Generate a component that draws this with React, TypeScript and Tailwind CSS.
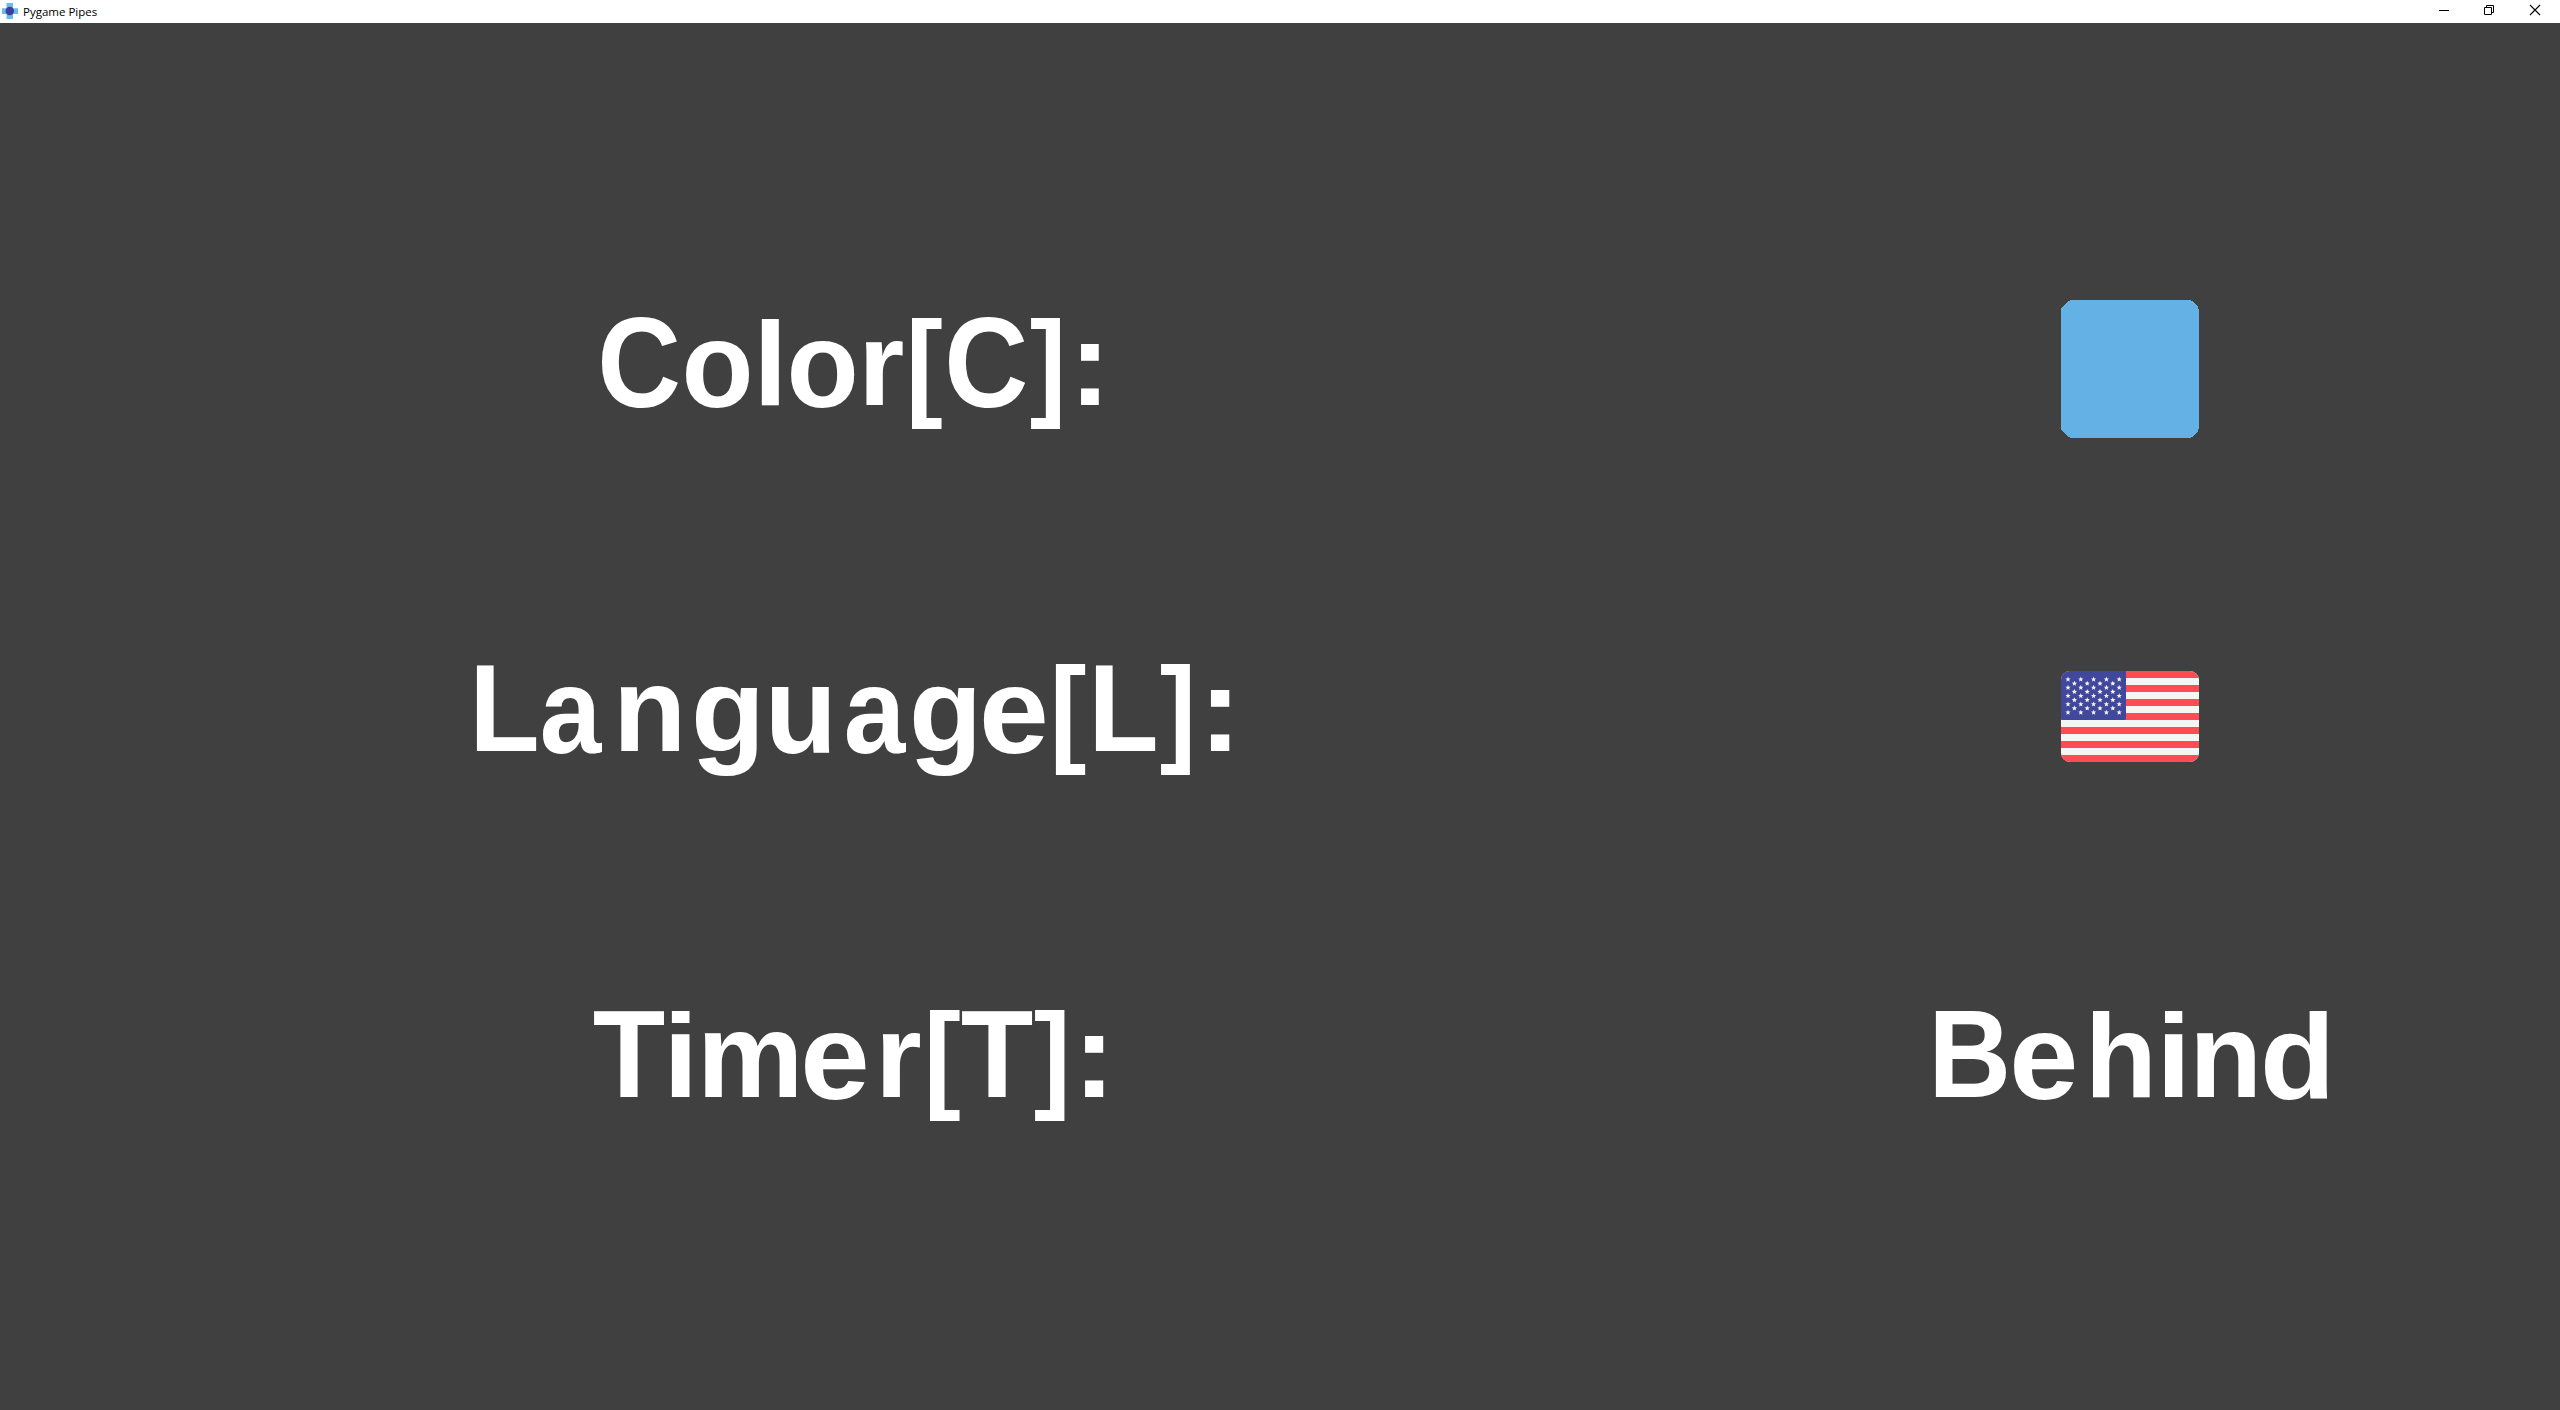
import type { CSSProperties } from "react";

/** Ink box of each glyph in thousandths of an em: left, right, up, down. */
const INK: Record<string, [number, number, number, number]> = {
  C: [41, 695, 698, 10],
  o: [39, 572, 538, 10],
  l: [70, 207, 725, 0],
  r: [66, 374, 538, 0],
  "[": [56, 321, 725, 208],
  "]": [12, 277, 725, 208],
  ":": [96, 237, 505, 0],
  L: [67, 580, 688, 0],
  a: [29, 563, 538, 10],
  n: [66, 549, 538, 0],
  u: [62, 545, 528, 10],
  e: [39, 522, 538, 10],
  g: [41, 544, 538, 212],
  T: [11, 600, 688, 0],
  i: [70, 207, 725, 0],
  m: [66, 827, 538, 0],
  B: [67, 677, 688, 0],
  h: [70, 549, 725, 0],
  d: [41, 545, 725, 10],
};

/** Height above and depth below the baseline, in pixels. */
const HEIGHTS: Record<string, [number, number]> = {
  C: [87, 3],
  o: [64.3, 3],
  l: [86, 0],
  r: [64.3, 0],
  "[": [86, 24],
  "]": [86, 24],
  ":": [61, 0],
  L: [86, 0],
  a: [64.6, 3],
  n: [64.4, 0],
  u: [64, 3],
  e: [64.3, 2.9],
  g: [64.3, 25],
  T: [86, 0],
  i: [86, 0],
  m: [64.6, 0],
  B: [86, 0],
  h: [86, 0],
  d: [86, 2.8],
};

type Glyph = [char: string, left: number, right: number];

const COLOR: Glyph[] = [
  ["C", 602.1, 677.9], ["o", 686.1, 749], ["l", 762.1, 779], ["o", 791.1, 854.2], ["r", 866.4, 902.9],
  ["[", 912.5, 942], ["C", 948.9, 1025], ["]", 1031.1, 1060], [":", 1081.3, 1099],
];
const LANGUAGE: Glyph[] = [
  ["L", 477.2, 536.3], ["a", 543.1, 602.2], ["n", 621, 679], ["g", 696.4, 757.4], ["u", 772.1, 829.2],
  ["a", 847, 906.1], ["g", 913.8, 974], ["e", 984, 1044.6], ["[", 1055.6, 1084.8], ["L", 1096.4, 1155.5],
  ["]", 1161.2, 1190], [":", 1211, 1229.3],
];
const TIMER: Glyph[] = [
  ["T", 594.1, 664], ["i", 672.4, 689.9], ["m", 705, 796], ["e", 804.9, 865.2], ["r", 883, 920],
  ["[", 929.6, 959.1], ["T", 962.1, 1032.1], ["]", 1035, 1064.3], [":", 1085, 1103.1],
];
const BEHIND: Glyph[] = [
  ["B", 1936.2, 2006.2], ["e", 2014.2, 2074.2], ["h", 2092.6, 2149.2], ["i", 2164.8, 2182], ["n", 2197.2, 2254.8],
  ["d", 2265, 2327],
];

const EM = 0.118;

function fit([char, left, right]: Glyph, next?: Glyph): CSSProperties {
  const [l, r, up, down] = INK[char];
  const [above, below] = HEIGHTS[char];
  const sx = (right - left) / ((r - l) * EM);
  const sy = (above + below) / ((up + down) * EM);
  const dx = -l * EM * sx;
  const dy = below - down * EM * sy;
  return {
    width: (next ? next[1] : right) - left,
    transform: `translate(${dx}px, ${dy}px) scale(${sx}, ${sy})`,
  };
}

function Word({ glyphs }: { glyphs: Glyph[] }) {
  return (
    <div className="flex h-[118px] whitespace-nowrap text-[118px] leading-[118px] font-bold text-white">
      {glyphs.map((g, i) => (
        <span key={i} className="block shrink-0 origin-[0_100px]" style={fit(g, glyphs[i + 1])}>
          {g[0]}
        </span>
      ))}
    </div>
  );
}

function star(cx: number, cy: number) {
  return Array.from({ length: 10 }, (_, k) => {
    const a = (Math.PI * k) / 5 - Math.PI / 2;
    const r = k % 2 ? 1.2 : 2.8;
    return `${(cx + r * Math.cos(a)).toFixed(2)},${(cy + r * Math.sin(a)).toFixed(2)}`;
  }).join(" ");
}

function Flag() {
  const stars: string[] = [];
  for (let row = 0; row < 9; row++) {
    const odd = row % 2;
    for (let col = 0; col < (odd ? 4 : 5); col++) {
      stars.push(star(7 + col * 12.8 + (odd ? 6.4 : 0), 8.4 + row * 4.13));
    }
  }
  return (
    <svg width="138" height="91" viewBox="0 0 138 91" className="block">
      <clipPath id="flag">
        <rect width="138" height="91" rx="9" />
      </clipPath>
      <g clipPath="url(#flag)">
        <rect width="138" height="91" fill="#f5f5f5" />
        {[0, 1, 2, 3, 4, 5, 6].map((i) => (
          <rect key={i} y={i * 14} width="138" height="7" fill="#ff4b55" />
        ))}
        <path d="M0 0H65V48L64 49H1L0 48Z" fill="#41479b" />
        {stars.map((p) => (
          <polygon key={p} points={p} fill="#f5f5f5" />
        ))}
      </g>
    </svg>
  );
}

function TitleBar() {
  return (
    <header className="flex h-[23px] items-start bg-white text-black">
      <svg width="20" height="23" viewBox="0 0 20 23" className="block shrink-0">
        <path d="M6.5 3H13V8.3H18V14H13V19H6.5V14H2V8.3H6.5Z" fill="#6bbbea" />
        <circle cx="9.8" cy="11" r="4.3" fill="#3f3f9b" />
      </svg>
      <span className="ml-[3px] mt-[3px] font-['Open_Sans'] text-[11.5px] leading-[17px]">Pygame Pipes</span>
      <svg width="121" height="23" viewBox="0 0 121 23" fill="none" stroke="#000" className="ml-auto block">
        <path d="M0 10.5H10" />
        <path d="M45.5 7.5H52.5V14.5H45.5ZM47.5 7.5V5.5H54.5V12.5H52.5" />
        <path d="M91 5L101 15M101 5L91 15" strokeWidth="1.1" />
      </svg>
    </header>
  );
}

export default function App() {
  return (
    <div className="h-[1410px] w-[2560px] overflow-hidden bg-[#404040] font-['Liberation_Sans',sans-serif]">
      <TitleBar />
      <main className="grid grid-cols-[1706px_854px] grid-rows-[346px_346px_346px] pt-[168px]">
        <div className="pt-[114px] pl-[602.1px]">
          <Word glyphs={COLOR} />
        </div>
        <div className="pt-[109px] pl-[355px]">
          <svg width="138" height="138" viewBox="0 0 138 138" shapeRendering="crispEdges" className="block">
            <path
              d="M10 0H128L131 1L137 7L138 10V128L137 131L131 137L128 138H10L7 137L1 131L0 128V10L1 7L7 1Z"
              fill="#64b2e5"
            />
          </svg>
        </div>
        <div className="pt-[114px] pl-[477.2px]">
          <Word glyphs={LANGUAGE} />
        </div>
        <div className="pt-[134px] pl-[355px]">
          <Flag />
        </div>
        <div className="pt-[114px] pl-[594.1px]">
          <Word glyphs={TIMER} />
        </div>
        <div className="pt-[114px] pl-[230.2px]">
          <Word glyphs={BEHIND} />
        </div>
      </main>
    </div>
  );
}
